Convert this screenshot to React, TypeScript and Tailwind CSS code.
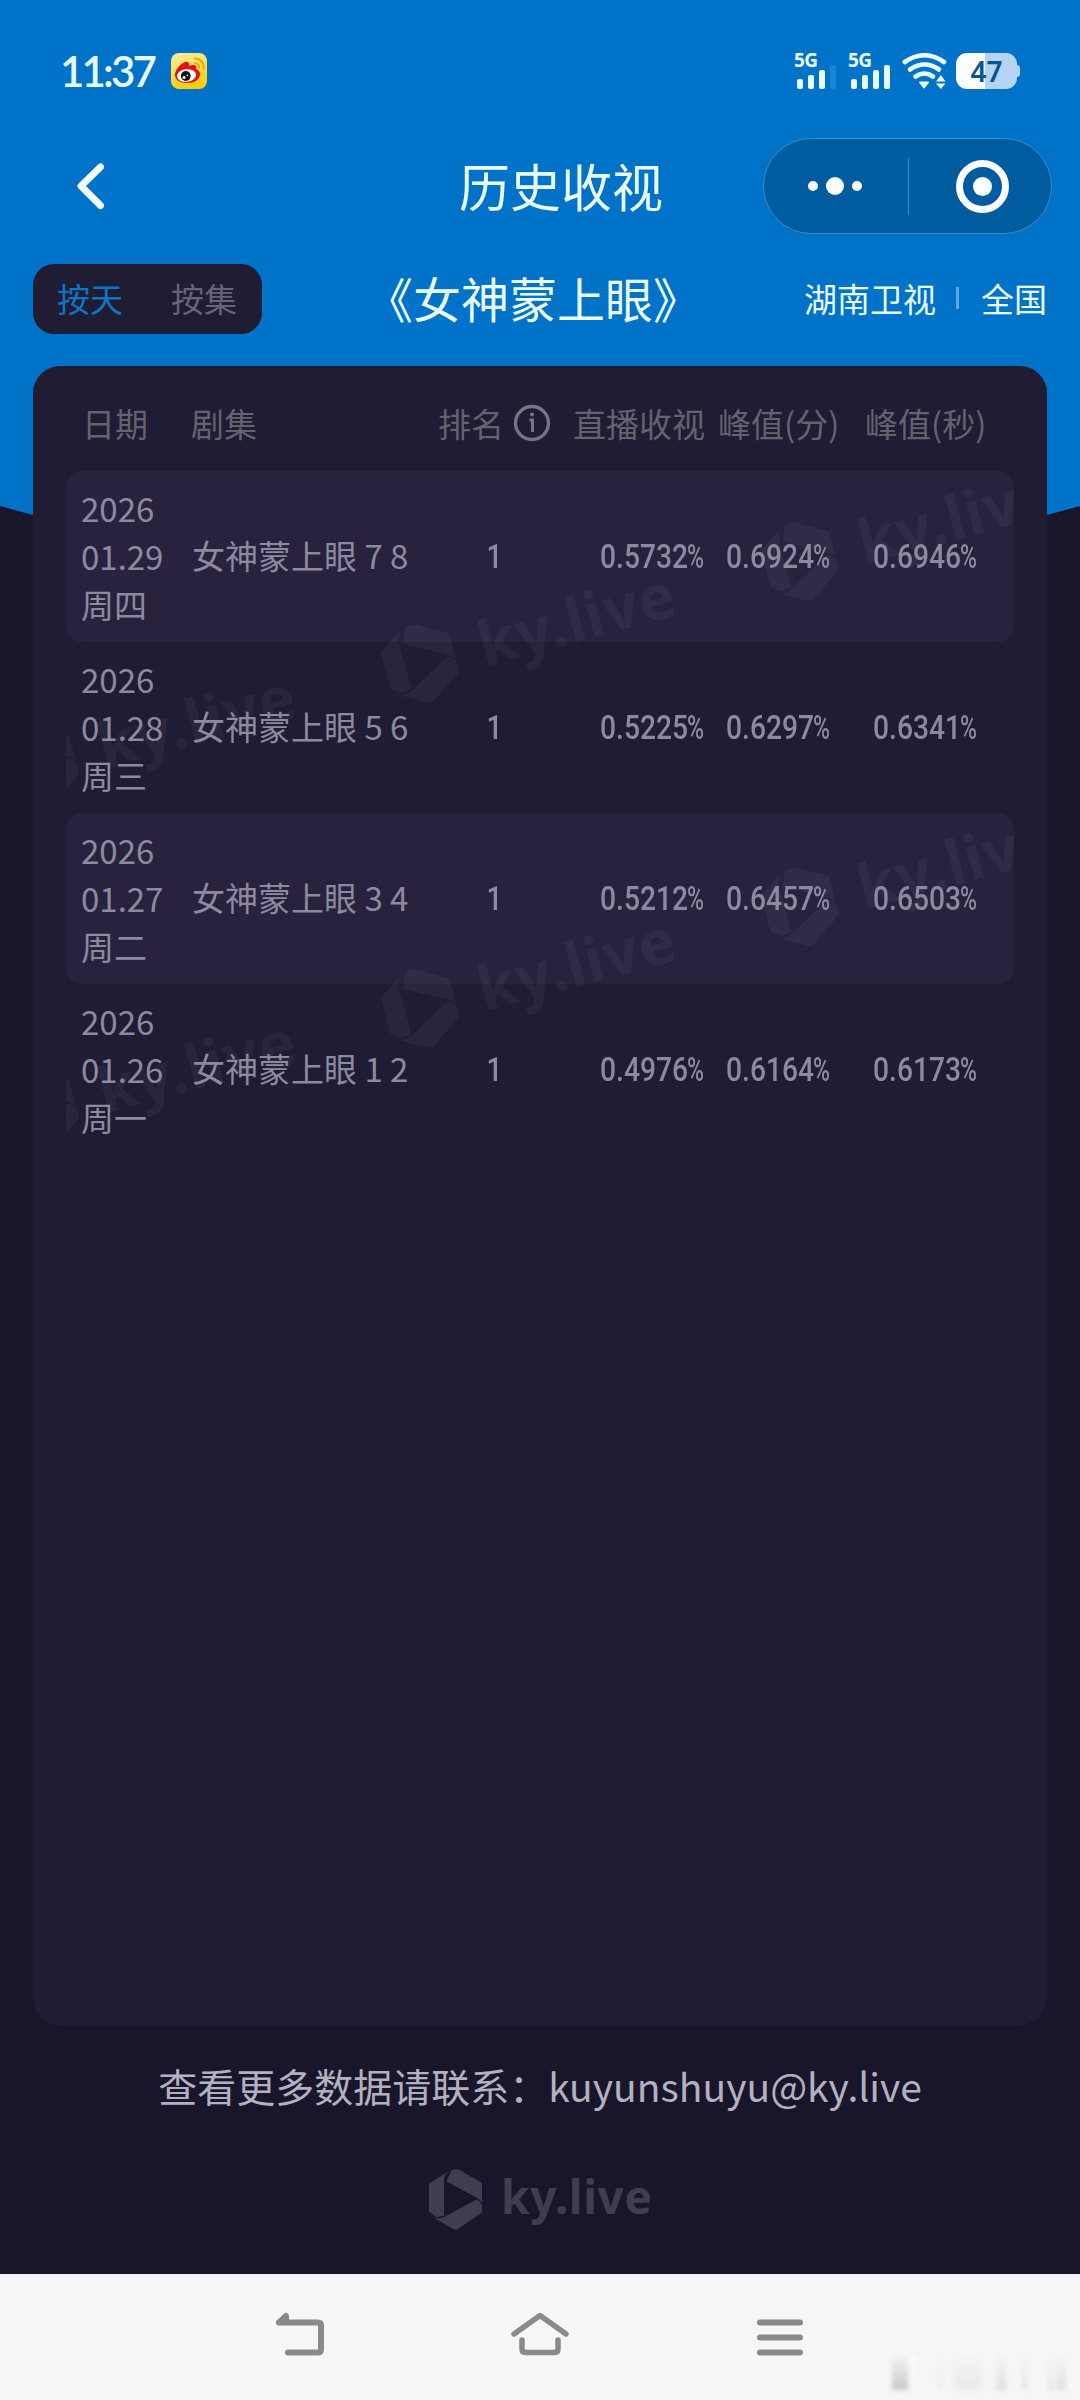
import React from 'react';

interface RatingRow {
  year: string;
  day: string;
  weekday: string;
  episode: string;
  rank: number;
  live: string;
  peakMinute: string;
  peakSecond: string;
}

const rows: RatingRow[] = [
  { year: '2026', day: '01.29', weekday: '周四', episode: '女神蒙上眼 7 8', rank: 1, live: '0.5732', peakMinute: '0.6924', peakSecond: '0.6946' },
  { year: '2026', day: '01.28', weekday: '周三', episode: '女神蒙上眼 5 6', rank: 1, live: '0.5225', peakMinute: '0.6297', peakSecond: '0.6341' },
  { year: '2026', day: '01.27', weekday: '周二', episode: '女神蒙上眼 3 4', rank: 1, live: '0.5212', peakMinute: '0.6457', peakSecond: '0.6503' },
  { year: '2026', day: '01.26', weekday: '周一', episode: '女神蒙上眼 1 2', rank: 1, live: '0.4976', peakMinute: '0.6164', peakSecond: '0.6173' },
];

const WeiboIcon = () => (
  <svg viewBox="0 0 36 36" className="h-9 w-9">
    <defs>
      <linearGradient id="weibo" x1="0" y1="0" x2="0.3" y2="1">
        <stop offset="0" stopColor="#f3eea0" />
        <stop offset="0.5" stopColor="#fbe05a" />
        <stop offset="1" stopColor="#ffcc12" />
      </linearGradient>
    </defs>
    <rect width="36" height="36" rx="8" fill="url(#weibo)" />
    <path d="M4 22c0-5 5-11 10-13 3-1 5 1 4 4 4-2 9-1 7 3 3 1 4 3 4 5 0 6-6 9-13 9S4 27 4 22Z" fill="#e01212" />
    <ellipse cx="15.5" cy="22.5" rx="9.6" ry="6.3" fill="#fff" transform="rotate(-6 15.5 22.5)" />
    <circle cx="14.8" cy="23" r="4.9" fill="#111" />
    <circle cx="13" cy="24.6" r="1.5" fill="#fff" />
    <circle cx="16.4" cy="22.4" r="0.8" fill="#fff" />
    <path d="M24 5.5a8.5 8.5 0 0 1 8.5 10M24 10a4.5 4.5 0 0 1 4.3 5" fill="none" stroke="#f5a118" strokeWidth="2" strokeLinecap="round" />
  </svg>
);

const Signal: React.FC<{ weak?: boolean }> = ({ weak }) => (
  <div className="flex h-9 w-[46px] flex-col justify-between">
    <span className="-mt-[1px] h-4 font-['Noto_Sans'] text-[19px] leading-4 font-bold tracking-[-0.5px]">5G</span>
    <div className="-mt-[6px] ml-[3px] flex items-end gap-[5px]">
      <i className="h-[10px] w-[6px] rounded-[2px] bg-[#e6fbff]" />
      <i className="h-[14px] w-[6px] rounded-[2px] bg-[#e6fbff]" />
      <i className="h-[19px] w-[6px] rounded-[2px] bg-[#e6fbff]" />
      <i className={`h-[24px] w-[6px] rounded-[2px] ${weak ? 'bg-[#1488d4]' : 'bg-[#e6fbff]'}`} />
    </div>
  </div>
);

const WifiIcon = () => (
  <svg viewBox="0 0 45 36" className="h-9 w-[45px]" fill="none" stroke="#e9fcff" strokeWidth="4.6" strokeLinecap="round">
    <path d="M2.8 9Q22.500-4.500 42 9" />
    <path d="M8 16.500Q22.500 6.500 37 16.500" />
    <path d="M13.500 23.500Q22.500 17.500 31 23.500" />
    <path d="M18 29.500h8l-4 5z" fill="#e9fcff" stroke="#e9fcff" strokeWidth="2" strokeLinejoin="round" />
    <path d="M34 28.500h9.500l-4.700-6.500zM34 30.500h9.500l-4.700 5.500z" fill="#e9fcff" stroke="none" />
  </svg>
);

const Battery = () => (
  <div className="flex items-center">
    <div className="flex h-9 w-[61px] items-center justify-center rounded-[11px] bg-linear-to-r from-white from-47% to-[#b5d4f3] to-47%">
      <span className="font-['Noto_Sans'] text-[28px] leading-9 font-semibold text-[#07568f]">47</span>
    </div>
    <i className="h-3 w-[3px] rounded-r-[3px] bg-[#b5d4f3]" />
  </div>
);

const KyLogo: React.FC<{ className: string }> = ({ className }) => (
  <svg viewBox="0 0 226 62" className={className} fill="currentColor">
    <path d="M0 14.500 20 2q-5 4-5 9.500V47L7 48 0 42.500z" />
    <path d="M22.500 1.200Q28-.5 31 1.300L53 14v20q-1.500-3-4-4.500L17.500 12.500z" />
    <path d="M47.500 30.500Q53 33 53 38v5.500L29 60q-2.500 1-5 0L6 49.500q6 .5 11-2.500z" />
    <text x="72" y="45" fontFamily="Noto Sans" fontWeight="700" fontSize="46" textLength="151">ky.live</text>
  </svg>
);

const StatusBar = () => (
  <div className="flex h-[142px] items-start justify-between pt-[53px] pr-[60px] pl-[60px] text-[#e6fbff]">
    <div className="flex items-center">
      <span className="w-[111px] font-['Lato'] text-[42px] leading-9 font-semibold tracking-[-2.8px]">11:37</span>
      <WeiboIcon />
    </div>
    <div className="flex">
      <Signal weak />
      <div className="w-2" />
      <Signal />
      <div className="w-2" />
      <WifiIcon />
      <div className="w-[9px]" />
      <Battery />
    </div>
  </div>
);

const TitleBar = () => (
  <div className="-mt-1 grid h-[96px] grid-cols-[289px_1fr_289px] items-center pr-7 pl-7">
    <svg viewBox="0 0 30 48" className="ml-[47px] h-12 w-[30px]" fill="none" stroke="#f2fdff" strokeWidth="7" strokeLinecap="round" strokeLinejoin="round">
      <path d="M25.500 5 6 24l19.500 19.500" />
    </svg>
    <h1 className="-mt-px pl-[42px] text-center text-[51px] leading-none text-[#e9fcff]">历史收视</h1>
    <div className="flex h-[96px] w-[289px] items-center rounded-full border border-[#348fcc] bg-[#005c9e]">
      <div className="flex w-[144px] items-center justify-center gap-2 pr-[2px]">
        <i className="h-[10px] w-[10px] rounded-full bg-white" />
        <i className="h-[18px] w-[18px] rounded-full bg-white" />
        <i className="h-[10px] w-[10px] rounded-full bg-white" />
      </div>
      <div className="h-[57px] w-px bg-[#348fcc]" />
      <div className="flex flex-1 items-center justify-center pl-1">
        <div className="flex h-[53px] w-[53px] items-center justify-center rounded-full border-[7px] border-white">
          <i className="h-[19px] w-[19px] rounded-full bg-white" />
        </div>
      </div>
    </div>
  </div>
);

const FilterBar = () => (
  <div className="mt-[30px] grid h-[70px] grid-cols-[289px_1fr_289px] items-center px-[34px]">
    <div className="-ml-px flex h-[70px] w-[229px] items-center justify-between rounded-[21px] bg-[#1f1c34] pr-[25px] pb-[2px] pl-6 text-[33px] leading-none">
      <span className="text-[#0c76c6]">按天</span>
      <span className="text-[#66637a]">按集</span>
    </div>
    <h2 className="-mx-10 -mt-[4px] pr-[14px] text-center text-[48px] leading-none whitespace-nowrap text-[#e9fcff]">《女神蒙上眼》</h2>
    <div className="-mr-px flex items-center justify-end pb-[2px] text-[33px] leading-none whitespace-nowrap text-[#e9fcff]">
      <span>湖南卫视</span>
      <i className="mr-[22px] ml-[20px] h-[22px] w-[3px] bg-[#5aa9e2]" />
      <span>全国</span>
    </div>
  </div>
);

const InfoIcon = () => (
  <svg viewBox="0 0 38 38" className="h-[38px] w-[38px]" fill="none" stroke="#777484">
    <circle cx="19" cy="19" r="16.500" strokeWidth="3.400" />
    <path d="M16.500 16h3v12" strokeWidth="3" />
    <circle cx="19" cy="10.500" r="2" fill="#777484" stroke="none" />
  </svg>
);

const TableHeader = () => (
  <div className="flex h-[105px] items-center pt-[9px] pl-[49px] text-[33px] leading-none whitespace-nowrap text-[#65626f]">
    <span className="w-[109px]">日期</span>
    <span className="w-[247px]">剧集</span>
    <span className="w-[75px]">排名</span>
    <span className="w-[60px]"><InfoIcon /></span>
    <span className="w-[145px]">直播收视</span>
    <span className="w-[147px]">峰值(分)</span>
    <span>峰值(秒)</span>
  </div>
);

// Narrow DIN-like figures: digits and the percent sign are squeezed separately
const Percent: React.FC<{ value: string; className: string }> = ({ value, className }) => (
  <div className={`flex items-center pb-[2px] font-['Roboto'] text-[34px] leading-none font-medium ${className}`}>
    <span className="w-[87px] origin-left scale-x-[0.83]">{value}</span>
    <span className="w-4 origin-left scale-x-[0.68]">%</span>
  </div>
);

const TableRow: React.FC<{ row: RatingRow; striped: boolean }> = ({ row, striped }) => (
  <div className={`flex h-[171px] items-center rounded-[16px] pl-[15px] text-[33px] whitespace-nowrap text-[#8c8a9e] ${striped ? 'bg-[#28223f]' : ''}`}>
    <div className="relative z-10 w-[111px] pb-[2px] leading-[48px]">
      <div>{row.year}</div>
      <div>{row.day}</div>
      <div>{row.weekday}</div>
    </div>
    <div className="relative z-10 w-[275px] pb-[2px] leading-none">{row.episode}</div>
    <div className="relative z-10 w-[54px] pb-[1px] text-center font-['Roboto'] text-[33px] leading-none font-medium">
      <span className="inline-block scale-x-[0.85]">{row.rank}</span>
    </div>
    <Percent value={row.live} className="relative z-10 ml-[79px] w-[126px]" />
    <Percent value={row.peakMinute} className="relative z-10 w-[147px]" />
    <Percent value={row.peakSecond} className="relative z-10" />
  </div>
);

const Watermark = () => (
  <div className="pointer-events-none absolute inset-0 overflow-hidden text-white/[0.045]">
    <KyLogo className="absolute top-[122px] left-[315px] h-[83px] w-[303px] -rotate-15" />
    <KyLogo className="absolute top-[20px] left-[695px] h-[83px] w-[303px] -rotate-15" />
    <KyLogo className="absolute top-[224px] left-[-65px] h-[83px] w-[303px] -rotate-15" />
    <KyLogo className="absolute top-[467px] left-[315px] h-[83px] w-[303px] -rotate-15" />
    <KyLogo className="absolute top-[365px] left-[695px] h-[83px] w-[303px] -rotate-15" />
    <KyLogo className="absolute top-[569px] left-[-65px] h-[83px] w-[303px] -rotate-15" />
  </div>
);

const NavBar = () => (
  <div className="relative flex h-[126px] items-start justify-center gap-[180px] bg-[#f6f6f7] pt-[36px]">
    <svg viewBox="0 0 60 48" className="h-12 w-[60px]" fill="none" stroke="#8a8a8a" strokeWidth="6" strokeLinecap="round" strokeLinejoin="round">
      <path d="M9 12.500h39q3 0 3 3v24q0 3-3 3H18M9 12.500 16 6v6" />
    </svg>
    <svg viewBox="0 0 60 48" className="h-12 w-[60px]" fill="none" stroke="#8a8a8a" strokeWidth="5.500" strokeLinecap="round" strokeLinejoin="round">
      <path d="M4 24 30 5.500 56 24" />
      <path d="M12 30v9q0 3.500 3.500 3.500h29q3.500 0 3.500-3.500v-9" />
    </svg>
    <svg viewBox="0 0 60 48" className="h-12 w-[60px]" fill="none" stroke="#8a8a8a" strokeWidth="6" strokeLinecap="round">
      <path d="M10 12.500h40M10 27.500h40M10 42.500h40" />
    </svg>
    <div className="absolute top-[80px] left-[892px] flex h-9 items-stretch blur-[2px]">
      <i className="w-4 bg-linear-to-b from-transparent to-[#c8c8c8]" />
      <i className="ml-1 w-1 bg-linear-to-b from-white to-transparent" />
      <i className="ml-[22px] w-[6px] bg-linear-to-b from-transparent to-[#efefef]" />
      <i className="ml-[10px] w-[28px] bg-linear-to-b from-transparent to-[#eaeaea]" />
      <i className="ml-[14px] w-[10px] bg-linear-to-b from-transparent to-[#e0e0e0]" />
      <i className="ml-4 w-[6px] bg-linear-to-b from-transparent to-[#e6e6e6]" />
      <i className="ml-[20px] w-[6px] bg-linear-to-b from-transparent to-[#e6e6e6]" />
      <i className="ml-[3px] w-[9px] bg-linear-to-b from-transparent to-[#e0e0e0]" />
    </div>
  </div>
);

const App: React.FC = () => {
  return (
    <div className="relative flex h-[2400px] w-[1080px] flex-col overflow-hidden bg-[#19162b] font-['Noto_Sans_CJK_SC',sans-serif]">
      <div className="absolute inset-x-0 top-0 h-[600px] bg-[#0072c7] [clip-path:polygon(0_0,100%_0,100%_506px,1047px_515px,540px_600px,33px_515px,0_506px)]" />
      <div className="relative flex flex-1 flex-col">
        <StatusBar />
        <TitleBar />
        <FilterBar />
        <div className="mx-[33px] mt-[32px] h-[1659px] rounded-[27px] bg-[#1f1c34] pr-[33px]">
          <TableHeader />
          <div className="relative ml-[33px]">
            {rows.map((row, i) => (
              <TableRow key={row.day} row={row} striped={i % 2 === 0} />
            ))}
            <Watermark />
          </div>
        </div>
        <p className="mt-[40px] text-center text-[39px] leading-[40px] text-[#b3b1bf]">查看更多数据请联系：kuyunshuyu@ky.live</p>
        <div className="mt-[64px] flex justify-center">
          <KyLogo className="ml-1 h-[62px] w-[226px] text-[#403d4e]" />
        </div>
      </div>
      <NavBar />
    </div>
  );
};

export default App;
